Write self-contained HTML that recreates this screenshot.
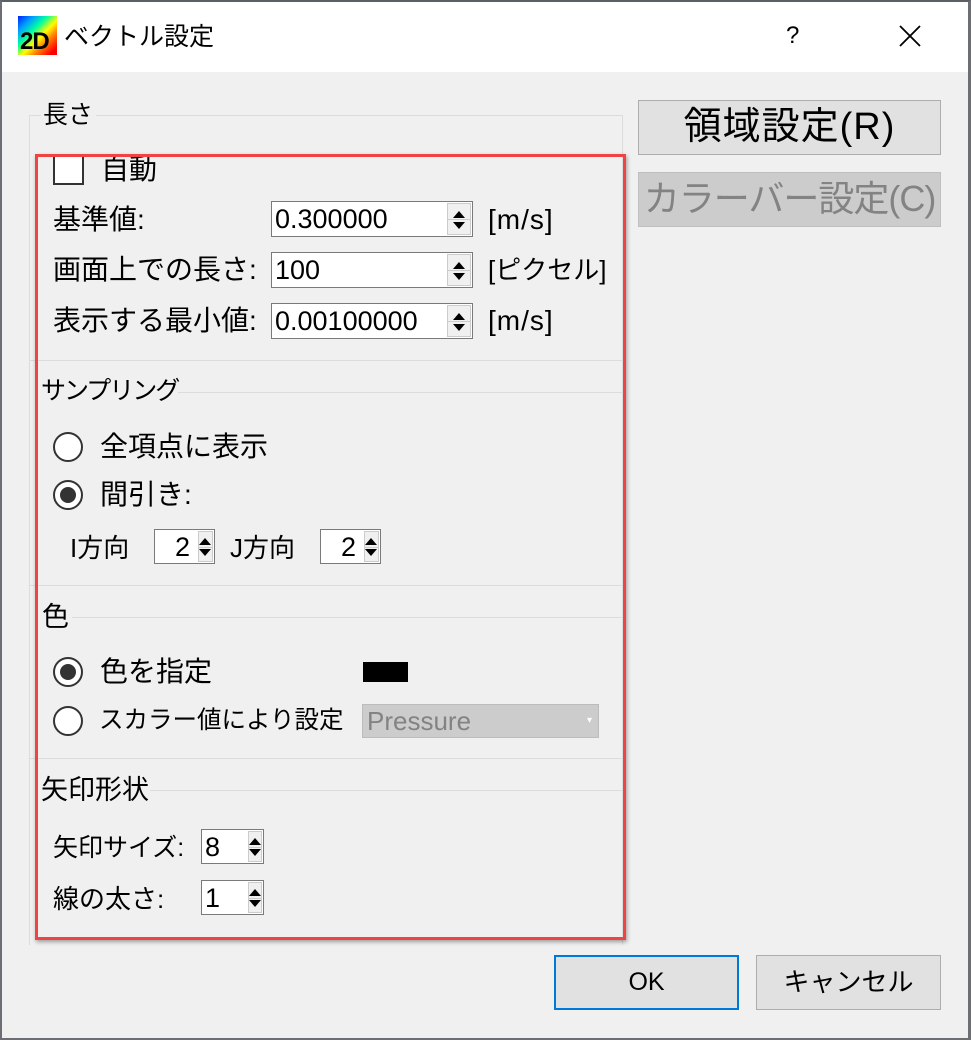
<!DOCTYPE html>
<html><head><meta charset="utf-8"><style>
*{margin:0;padding:0;box-sizing:border-box}
body{width:971px;height:1040px;overflow:hidden;background:#f0f0f0;font-family:"Liberation Sans","Noto Sans CJK JP",sans-serif;color:#000;position:relative}
.a{position:absolute}
.t{position:absolute;font-size:28px;line-height:32px;white-space:nowrap}
.g{position:absolute;font-size:25px;line-height:30px;white-space:nowrap}
.frame{position:absolute;left:0;top:0;width:971px;height:1040px;border:2px solid #6b6e72;border-top-color:#5b6067;border-right-width:3px}
.title{position:absolute;left:2px;top:2px;width:966px;height:70px;background:#fff}
.gl{position:absolute;height:1px;background:#dcdcdc}
.gv{position:absolute;width:1px;background:#dcdcdc}
.spin{position:absolute;background:#fff;border:1px solid #7a7a7a}
.spin .v{position:absolute;left:3px;font-size:27px;line-height:32px;white-space:nowrap}
.spin .b{position:absolute;right:1px;top:1px;bottom:1px;width:24px;background:#f0f0f0;border:1px solid #ccc}
.spin .b:before{content:"";position:absolute;left:5px;top:22%;border:6px solid transparent;border-bottom:7px solid #000;border-top:0}
.spin .b:after{content:"";position:absolute;left:5px;bottom:18%;border:6px solid transparent;border-top:7px solid #000;border-bottom:0}
.spin .b i{position:absolute;left:0;right:0;top:50%;height:1px;background:#ccc}
.spin .b.s:before,.spin .b.s:after{left:0}
.radio{position:absolute;width:30px;height:30px;border:2px solid #333;border-radius:50%;background:#fff}
.radio.on:after{content:"";position:absolute;left:5px;top:5px;width:16px;height:16px;border-radius:50%;background:#333}
.btn{position:absolute;background:#e1e1e1;border:1px solid #adadad;text-align:center;white-space:nowrap}
</style></head><body>
<div class="title"></div>
<div class="a" style="left:18px;top:16px;width:39px;height:39px;background:linear-gradient(135deg,#0020ff 0%,#00a0ff 20%,#00ffa0 38%,#ffff00 55%,#ff8000 70%,#ff0000 90%)"></div>
<div class="a" style="left:20px;top:28px;font-size:24px;font-weight:bold;color:#000;line-height:28px;letter-spacing:-1px">2D</div>
<div class="t" style="left:64px;top:21px;font-size:25px;line-height:32px">ベクトル設定</div>
<div class="t" style="left:786px;top:20px;font-size:24px">?</div>
<svg class="a" style="left:898px;top:24px" width="24" height="24"><path d="M2 2L22 22M22 2L2 22" stroke="#000" stroke-width="1.8"/></svg>

<div class="gl" style="left:96px;top:115px;width:527px"></div>
<div class="gv" style="left:29px;top:115px;height:830px"></div>
<div class="gl" style="left:29px;top:115px;width:12px"></div>
<div class="gv" style="left:622px;top:115px;height:830px"></div>
<div class="gl" style="left:29px;top:360px;width:594px"></div>
<div class="gl" style="left:178px;top:392px;width:445px"></div>
<div class="gl" style="left:29px;top:585px;width:594px"></div>
<div class="gl" style="left:72px;top:617px;width:551px"></div>
<div class="gl" style="left:29px;top:758px;width:594px"></div>
<div class="gl" style="left:150px;top:790px;width:473px"></div>

<div class="g" style="left:43px;top:100px">長さ</div>
<div class="a" style="left:53px;top:155px;width:31px;height:30px;border:2px solid #333;background:#fff"></div>
<div class="t" style="left:101px;top:154px">自動</div>

<div class="t" style="left:53px;top:204px">基準値:</div>
<div class="spin" style="left:271px;top:201px;width:202px;height:36px"><span class="v" style="top:1px">0.300000</span><div class="b"><i></i></div></div>
<div class="t" style="left:488px;top:204px;letter-spacing:1px">[m/s]</div>

<div class="t" style="left:53px;top:254px">画面上での長さ:</div>
<div class="spin" style="left:271px;top:252px;width:202px;height:36px"><span class="v" style="top:1px">100</span><div class="b"><i></i></div></div>
<div class="t" style="left:488px;top:254px;font-size:26px">[ピクセル]</div>

<div class="t" style="left:53px;top:305px">表示する最小値:</div>
<div class="spin" style="left:271px;top:303px;width:202px;height:36px"><span class="v" style="top:1px">0.00100000</span><div class="b"><i></i></div></div>
<div class="t" style="left:488px;top:305px;letter-spacing:1px">[m/s]</div>

<div class="g" style="left:41px;top:376px;letter-spacing:-2px">サンプリング</div>
<div class="radio" style="left:53px;top:432px"></div>
<div class="t" style="left:100px;top:431px">全項点に表示</div>
<div class="radio on" style="left:53px;top:480px"></div>
<div class="t" style="left:100px;top:479px">間引き:</div>
<div class="t" style="left:70px;top:532px;font-size:26px">I方向</div>
<div class="spin" style="left:154px;top:529px;width:61px;height:35px"><span class="v" style="top:1px;left:20px">2</span><div class="b s" style="width:15px"><i></i></div></div>
<div class="t" style="left:230px;top:532px;font-size:26px">J方向</div>
<div class="spin" style="left:320px;top:529px;width:61px;height:35px"><span class="v" style="top:1px;left:20px">2</span><div class="b s" style="width:15px"><i></i></div></div>

<div class="g" style="left:42px;top:602px;font-size:27px">色</div>
<div class="radio on" style="left:53px;top:657px"></div>
<div class="t" style="left:100px;top:656px">色を指定</div>
<div class="a" style="left:363px;top:662px;width:45px;height:20px;background:#000"></div>
<div class="radio" style="left:53px;top:706px"></div>
<div class="t" style="left:99px;top:705px;font-size:24.5px">スカラー値により設定</div>
<div class="a" style="left:362px;top:704px;width:237px;height:34px;background:#cccccc;border:1px solid #bcbcbc"><span class="t" style="left:4px;top:0px;font-size:26px;color:#838383">Pressure</span><span class="a" style="right:6px;top:10px;font-size:10px;color:#fff">&#9662;</span></div>

<div class="g" style="left:41px;top:775px;font-size:27px">矢印形状</div>
<div class="t" style="left:53px;top:832px;font-size:25px">矢印サイズ:</div>
<div class="spin" style="left:201px;top:829px;width:63px;height:35px"><span class="v" style="top:1px">8</span><div class="b s" style="width:14px"><i></i></div></div>
<div class="t" style="left:53px;top:883px;font-size:26px">線の太さ:</div>
<div class="spin" style="left:201px;top:880px;width:63px;height:35px"><span class="v" style="top:1px">1</span><div class="b s" style="width:14px"><i></i></div></div>

<div class="a" style="left:35px;top:154px;width:591px;height:786px;border:3px solid #f04444;box-shadow:1px 2px 4px rgba(0,0,0,.35)"></div>

<div class="btn" style="left:638px;top:100px;width:303px;height:55px;font-size:38px;line-height:52px;letter-spacing:1px">領域設定(R)</div>
<div class="btn" style="left:638px;top:172px;width:303px;height:55px;font-size:36px;line-height:52px;background:#cccccc;border-color:#bfbfbf;color:#838383;letter-spacing:-1px">カラーバー設定(C)</div>
<div class="btn" style="left:554px;top:955px;width:185px;height:55px;border:2px solid #0078d7;font-size:25px;line-height:51px">OK</div>
<div class="btn" style="left:756px;top:955px;width:185px;height:55px;font-size:26px;line-height:53px">キャンセル</div>

<div class="frame"></div>
</body></html>
